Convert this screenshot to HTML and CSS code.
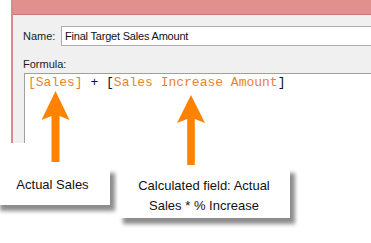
FILE: index.html
```html
<!DOCTYPE html>
<html lang="en">
<head>
    <meta charset="UTF-8">
    <title>Final Target Sales Amount</title>
    <link rel="stylesheet" href="styles.css">
</head>
<body>
    <div class="page">
        <div class="window">
            <div class="titlebar"></div>
            <div class="content">
                <div class="name-row">
                    <span class="label">Name:</span>
                    <div class="name-input">Final Target Sales Amount</div>
                </div>
                <div class="label formula-label">Formula:</div>
                <div class="formula"><span class="field">[Sales]</span> + [<span class="field">Sales Increase Amount</span>]</div>
            </div>
        </div>
        <div class="callouts">
            <div class="callout callout-actual">Actual Sales</div>
            <div class="callout callout-calc">Calculated field: Actual<br>Sales * % Increase</div>
        </div>
        <svg class="arrows" width="371" height="243" viewBox="0 0 371 243">
            <polygon points="55.5,91 69.5,120 59.5,116 59.5,162 51.5,162 51.5,116 41.5,120" />
            <polygon points="191,95 205,123 194.8,119 194.8,165 187.2,165 187.2,119 177,123" />
        </svg>
    </div>
</body>
</html>
```

FILE: styles.css
```css
body {
    margin: 0;
    background-color: #fff;
    font-family: 'Liberation Sans', Arial, sans-serif;
}

.page {
    position: relative;
    width: 371px;
    height: 243px;
    overflow: hidden;
}

.window {
    margin-left: 11px;
    height: 143px;
    border-left: 2px solid #d98b8b;
    background-color: #f0f0f0;
    display: flex;
    flex-direction: column;
    overflow: hidden;
}

.titlebar {
    height: 14px;
    flex: none;
    background-color: #e18f8f;
    border-bottom: 1px solid #c97878;
}

.content {
    flex: 1;
    display: flex;
    flex-direction: column;
    padding: 11px 0 0 10px;
}

.name-row {
    display: flex;
    align-items: center;
}

.label {
    font-size: 11px;
    line-height: 13px;
    color: #1b1b1b;
}

.name-row .label {
    width: 38px;
}

.name-input {
    flex: 1;
    height: 18px;
    line-height: 18px;
    border: 1px solid #abadb3;
    border-right: none;
    background-color: #fff;
    padding-left: 3px;
    font-size: 11px;
    letter-spacing: -0.2px;
    color: #111;
    white-space: nowrap;
}

.formula-label {
    margin-top: 12px;
}

.formula {
    flex: 1;
    margin: 2px 0 0 1px;
    border-top: 1px solid #a0a0a0;
    border-left: 1px solid #a0a0a0;
    background-color: #fff;
    padding: 1px 0 0 3px;
    font-family: 'Liberation Mono', 'Courier New', monospace;
    font-size: 13px;
    line-height: 15px;
    color: #10103a;
    white-space: nowrap;
}

.formula .field {
    color: #e8832f;
}

.callouts {
    display: flex;
    gap: 8px;
    margin: 24px 0 0 -5px;
}

.callout {
    box-sizing: border-box;
    background-color: #fff;
    box-shadow: 5px 6px 4px rgba(0, 0, 0, 0.45);
    font-size: 13px;
    line-height: 20px;
    text-align: center;
    color: #111;
}

.callout-actual {
    width: 115px;
    height: 38px;
    padding-top: 8px;
}

.callout-calc {
    width: 172px;
    height: 51px;
    padding-top: 9px;
}

.arrows {
    position: absolute;
    top: 0;
    left: 0;
    pointer-events: none;
    fill: #ff8200;
}
```
